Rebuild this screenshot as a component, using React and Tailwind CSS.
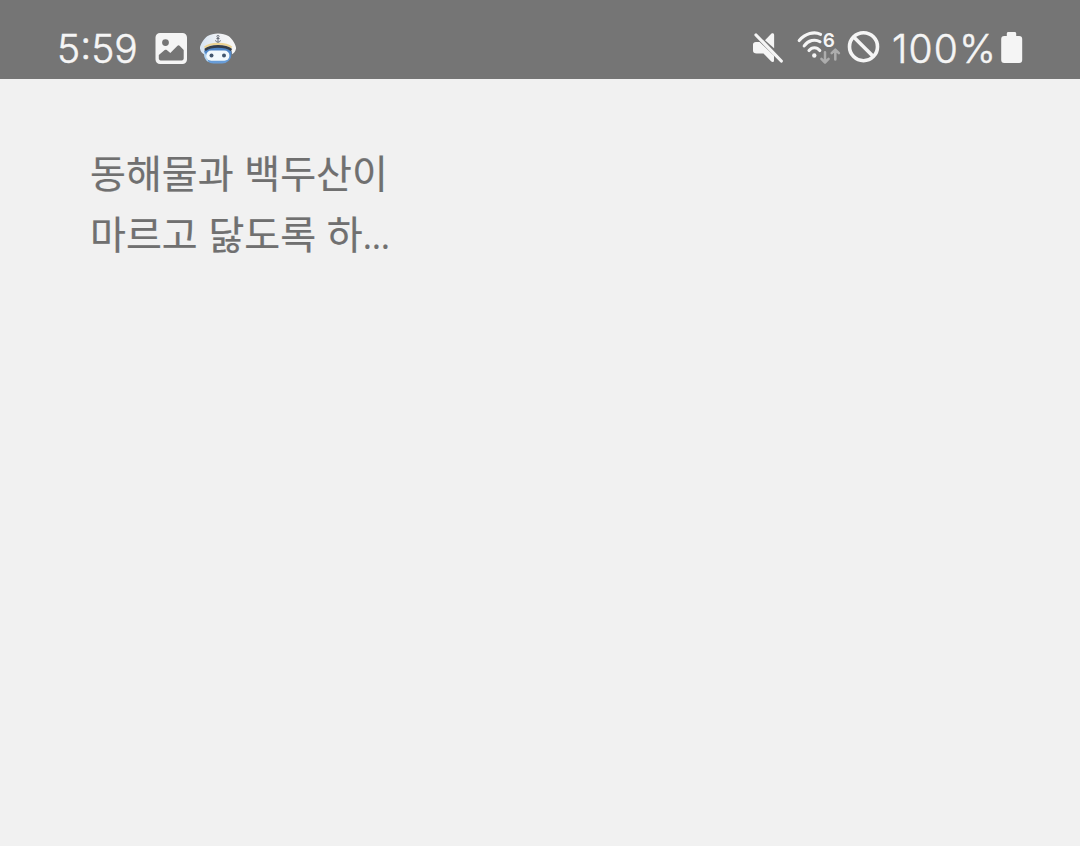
const ImageIcon = () => (
  <svg width="32" height="33" viewBox="0 0 32 33" fill="#f5f5f5">
    <path
      fillRule="evenodd"
      d="M5 1h22.500a4.500 4.500 0 0 1 4.500 4.500v22a4.500 4.500 0 0 1-4.500 4.500H5A4.500 4.500 0 0 1 .5 27.500V5.500A4.500 4.500 0 0 1 5 1zM10.500 7.200a3.400 3.400 0 1 0 0 6.800a3.400 3.400 0 0 0 0-6.800zM3.800 23v3.600c0 1 .8 1.800 1.800 1.800h21.300c1 0 1.800-.8 1.800-1.800v-8.600l-4.100-4.200c-.7-.7-1.400-.7-2.100 0l-7.200 7.300-3.500-3c-.8-.6-1.400-.6-2.100 0z"
    />
  </svg>
)

const SailorIcon = () => (
  <svg width="38" height="32" viewBox="0 0 38 32">
    <defs>
      <linearGradient id="sailor-head" x1="0" y1="0" x2="0" y2="1">
        <stop offset="0.3" stopColor="#4c83c4" />
        <stop offset="1" stopColor="#6ba0db" />
      </linearGradient>
      <linearGradient id="sailor-hat" x1="0" y1="0" x2="1" y2="0">
        <stop offset="0" stopColor="#d5e4f2" />
        <stop offset="0.5" stopColor="#eff1f5" />
        <stop offset="1" stopColor="#f7f7f6" />
      </linearGradient>
    </defs>
    <rect x="5" y="10" width="27.500" height="20.600" rx="9.500" fill="url(#sailor-head)" />
    <path d="M5 18.500v2.600c0 3.400 1.800 6.500 4.600 8.200L7.400 22z" fill="#b4d5f0" />
    <rect x="7.200" y="17.600" width="23.200" height="10.200" rx="5" fill="#f1f9fd" />
    <circle cx="12.500" cy="22.500" r="2" fill="#41566e" />
    <circle cx="25" cy="22.500" r="2" fill="#41566e" />
    <path d="M1 15.600C.5 12.500 4.800 5.600 8.600 3 14-.5 24-.5 29.400 3 33.200 5.600 37.500 12.500 37 15.600c-.2 2.600-2 4.800-4 5.600 0-3.200-.2-4-1.700-5C28 14.500 24 14 19 14S10 14.500 6.700 16.200C5.200 17 5 18 5 21.200 3 20.400 1.200 18.200 1 15.600z" fill="url(#sailor-hat)" />
    <path d="M5.600 14.600C9 11.800 13.500 10.900 19 10.900s10.500.9 13.600 3.700" fill="none" stroke="#edd493" strokeWidth="2.200" />
    <path d="M6 17C9.500 14.200 13.500 13.400 19 13.400S29 14.200 32.400 17" fill="none" stroke="#343d49" strokeWidth="2.600" />
    <circle cx="19" cy="3.400" r="1.100" fill="none" stroke="#59616c" strokeWidth=".8" />
    <path d="M19 4.500v4.600M17.400 5.600h3.200M16.600 7.300c.2 1.300 1.100 1.900 2.400 1.900s2.200-.6 2.400-1.900" fill="none" stroke="#59616c" strokeWidth=".9" />
  </svg>
)

const MuteIcon = () => (
  <svg width="32" height="32" viewBox="0 0 32 32" fill="#f5f5f5">
    <path d="M22.100 2.800v13.400l-9.100-7.900 6.500-6.700c1.100-.9 2.600-.4 2.600 1.200z" />
    <path d="M1 12.500c0-1.700 1.200-2.600 2.800-2.600h3.800L22 23.800v4.600c0 1.600-1.500 2.200-2.700 1.200L11.500 21.500H4.600C2.400 21.500 1 20.700 1 18.500z" />
    <path d="M4 3L29.300 29" stroke="#f5f5f5" strokeWidth="3.200" strokeLinecap="round" />
  </svg>
)

const WifiIcon = () => (
  <svg width="44" height="44" viewBox="0 -8 44 44" fill="none" strokeLinecap="round" strokeLinejoin="round">
    <g stroke="#f5f5f5" strokeWidth="3.100">
      <path d="M2.200 10.500C8.300 3.500 17 1.200 23.600 4.300" />
      <path d="M7.200 15.900C11.300 10.200 18 8.700 23 11.800" />
      <path d="M12 20.500c3-3.700 7.800-3.700 10.800 0" />
    </g>
    <circle cx="17.300" cy="25.500" r="2.200" fill="#f5f5f5" />
    <text x="25.800" y="17" fill="#f5f5f5" className="font-['Inter',sans-serif] text-[19px] font-semibold">6</text>
    <g stroke="#adadad" strokeWidth="2.500">
      <path d="M28 22.300v9.900M24.400 28.900l3.600 3.600 3.600-3.600" />
      <path d="M38.300 29.400V19.800M34.700 23.200l3.600-3.600 3.600 3.600" />
    </g>
  </svg>
)

const BlockIcon = () => (
  <svg width="34" height="34" viewBox="0 0 34 34" fill="none" stroke="#f5f5f5" strokeWidth="3.600">
    <circle cx="16.500" cy="16.700" r="14" />
    <path d="M6.700 7l19.600 19.500" />
  </svg>
)

const BatteryIcon = () => (
  <svg width="22" height="32" viewBox="0 0 22 32" fill="#f5f5f5">
    <path d="M7.300 0h6.400c.9 0 1.500.6 1.500 1.500V4h3A3 3 0 0 1 21.200 7v21a3 3 0 0 1-3 3h-15a3 3 0 0 1-3-3V7a3 3 0 0 1 3-3h2.600V1.500C5.800.6 6.400 0 7.300 0z" />
  </svg>
)

const StatusBar = () => {
  return (
    <header className="flex h-[79px] items-start justify-between bg-[#757575] px-[57px] pt-8 text-[#f5f5f5]">
      <div className="flex items-start">
        <span className="w-[98px] font-['Inter',sans-serif] text-[39px] leading-[33px] font-light [-webkit-text-stroke:0.5px_#f5f5f5]">5:59</span>
        <ImageIcon />
        <div className="ml-[12px] pt-px">
          <SailorIcon />
        </div>
      </div>
      <div className="flex items-start">
        <MuteIcon />
        <div className="ml-[13px] -mt-[10px]">
          <WifiIcon />
        </div>
        <div className="ml-[6px] -mt-[2px]">
          <BlockIcon />
        </div>
        <span className="ml-[11px] w-[109px] font-['Inter',sans-serif] text-[39px] leading-[33px] font-light tracking-[1.2px] [-webkit-text-stroke:0.5px_#f5f5f5]">100%</span>
        <BatteryIcon />
      </div>
    </header>
  )
}

const App = () => {
  return (
    <div className="min-h-screen bg-[#f1f1f1]">
      <StatusBar />
      <main className="px-[90px] pt-[62px]">
        <p className="font-['Noto_Sans_CJK_KR',sans-serif] text-[39px] leading-[61px] [word-spacing:2px] text-[#707070] [-webkit-text-stroke:0.2px_#707070]">
          동해물과 백두산이
          <br />
          마르고 닳도록 하<span className="font-['Open_Sans',sans-serif] text-[35px] leading-none">…</span>
        </p>
      </main>
    </div>
  )
}

export default App
